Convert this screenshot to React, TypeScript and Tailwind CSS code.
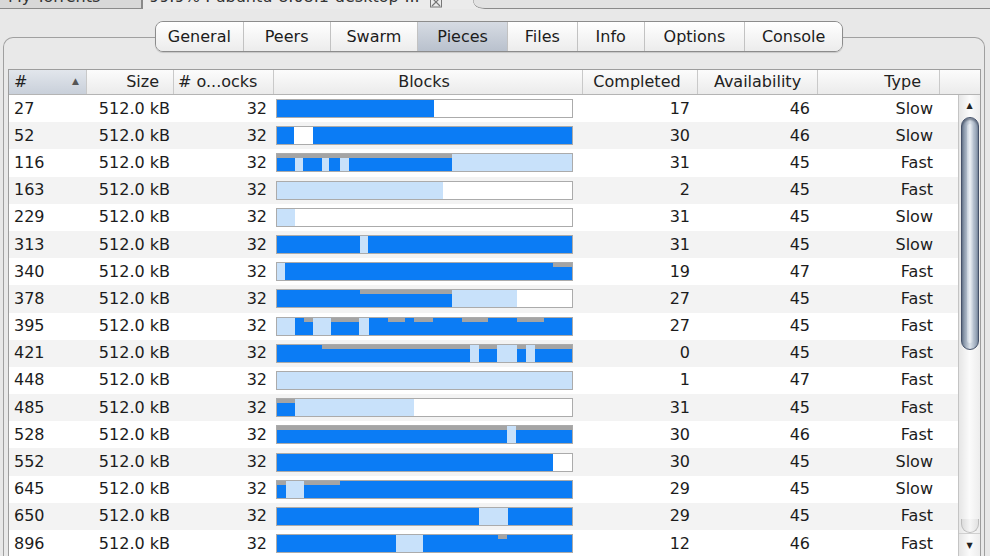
import React from "react";

type Seg = [string, number, number];
type Row = { n: string; c: string; a: string; t: string; seg: Seg[]; gray: [number, number][] };

const rows: Row[] = [
  { n: "27", c: "17", a: "46", t: "Slow", seg: [["B", 0, 158]], gray: [] },
  { n: "52", c: "30", a: "46", t: "Slow", seg: [["B", 0, 18], ["B", 37, 297]], gray: [] },
  {
    n: "116", c: "31", a: "45", t: "Fast",
    seg: [["B", 0, 19], ["L", 19, 27], ["B", 27, 46], ["L", 46, 53], ["B", 53, 64], ["L", 64, 73], ["B", 73, 176], ["L", 176, 297]],
    gray: [[0, 176]],
  },
  { n: "163", c: "2", a: "45", t: "Fast", seg: [["L", 0, 167]], gray: [] },
  { n: "229", c: "31", a: "45", t: "Slow", seg: [["L", 0, 19]], gray: [] },
  { n: "313", c: "31", a: "45", t: "Slow", seg: [["B", 0, 84], ["L", 84, 92], ["B", 92, 297]], gray: [] },
  { n: "340", c: "19", a: "47", t: "Fast", seg: [["L", 0, 9], ["B", 9, 297]], gray: [[277, 297]] },
  { n: "378", c: "27", a: "45", t: "Fast", seg: [["B", 0, 176], ["L", 176, 241]], gray: [[84, 176]] },
  {
    n: "395", c: "27", a: "45", t: "Fast",
    seg: [["L", 0, 19], ["B", 19, 37], ["L", 37, 55], ["B", 55, 83], ["L", 83, 93], ["B", 93, 297]],
    gray: [[28, 37], [55, 83], [112, 129], [138, 157], [186, 212], [241, 268]],
  },
  {
    n: "421", c: "0", a: "45", t: "Fast",
    seg: [["B", 0, 194], ["L", 194, 203], ["B", 203, 221], ["L", 221, 241], ["B", 241, 250], ["L", 250, 259], ["B", 259, 297]],
    gray: [[46, 194], [203, 221], [241, 250], [259, 297]],
  },
  { n: "448", c: "1", a: "47", t: "Fast", seg: [["L", 0, 297]], gray: [] },
  { n: "485", c: "31", a: "45", t: "Fast", seg: [["B", 0, 19], ["L", 19, 138]], gray: [[0, 19]] },
  { n: "528", c: "30", a: "46", t: "Fast", seg: [["B", 0, 297], ["L", 231, 240]], gray: [[0, 231], [240, 297]] },
  { n: "552", c: "30", a: "45", t: "Slow", seg: [["B", 0, 277]], gray: [] },
  { n: "645", c: "29", a: "45", t: "Slow", seg: [["B", 0, 297], ["L", 10, 28]], gray: [[0, 10], [28, 64]] },
  { n: "650", c: "29", a: "45", t: "Fast", seg: [["B", 0, 297], ["L", 203, 232]], gray: [] },
  { n: "896", c: "12", a: "46", t: "Fast", seg: [["B", 0, 297], ["L", 120, 147]], gray: [[222, 231]] },
];

const colors: Record<string, string> = { B: "#0b7cf5", L: "#c8e1fa" };

function clamp(v: number) {
  return Math.max(1, Math.min(296, v));
}

function Bar({ r }: { r: Row }) {
  return (
    <svg width={297} height={19} className="block">
      <rect x={0} y={0} width={297} height={19} fill="#ffffff" />
      {r.seg.map(([c, s, e], i) => (
        <rect key={i} x={clamp(s)} y={1} width={clamp(e) - clamp(s)} height={17} fill={colors[c]} />
      ))}
      {r.gray.map(([s, e], i) => (
        <rect key={"g" + i} x={clamp(s)} y={1} width={clamp(e) - clamp(s)} height={4} fill="#a4a4a4" />
      ))}
      <rect x={0.5} y={0.5} width={296} height={18} fill="none" stroke="#ababab" />
    </svg>
  );
}

const tabs: { label: string; w: string; sel?: boolean }[] = [
  { label: "General", w: "w-[88px]" },
  { label: "Peers", w: "w-[87px]" },
  { label: "Swarm", w: "w-[88px]" },
  { label: "Pieces", w: "w-[90px]", sel: true },
  { label: "Files", w: "w-[70px]" },
  { label: "Info", w: "w-[67px]" },
  { label: "Options", w: "w-[101px]" },
  { label: "Console", w: "w-[97px]" },
];

export default function App() {
  return (
    <div
      className="w-[990px] h-[556px] overflow-hidden bg-[#e8e8e8] text-[#1c1c1c] text-[16px]"
      style={{ fontFamily: '"DejaVu Sans", Verdana, sans-serif' }}
    >
      {/* top window tabs */}
      <div className="flex h-[9px]">
        <div className="w-[143px] h-[9px] overflow-hidden bg-[#d8d8d8] border-r-2 border-b border-[#8a8a8a]">
          <div className="-mt-[11px] pl-[8px] leading-[16px] text-[#333]">My Torrents</div>
        </div>
        <div className="w-[330px] h-[9px] overflow-hidden bg-[#ebebeb] flex items-start">
          <div className="-mt-[11px] pl-[6px] leading-[16px] whitespace-nowrap text-[#333]">
            99.9% : ubuntu-8.08.1-desktop-...
          </div>
          <svg width="14" height="9" className="ml-[9px] shrink-0">
            <rect x="1.5" y="-4" width="11" height="11" fill="none" stroke="#777" />
            <path d="M3 -2 L11 6 M11 -2 L3 6" stroke="#777" strokeWidth="1.2" />
          </svg>
        </div>
        <svg width="30" height="9" className="shrink-0">
          <rect x="0" y="0" width="30" height="9" fill="#e2e2e2" />
          <path d="M0 0 C0 5 4 8.5 12 8.5 L30 8.5" fill="none" stroke="#8a8a8a" />
          <path d="M0 0 L0 9 L12 9 C4 9 0 5 0 0 Z" fill="#ebebeb" />
        </svg>
        <div className="flex-1 h-[9px] bg-[#e2e2e2] border-b border-[#8a8a8a]" />
      </div>

      {/* group box */}
      <div className="mt-[28px] ml-[3px] w-[982px] h-[600px] border border-b-0 border-[#a0a0a0] rounded-t-[10px] bg-[#e9e9e9]">
        <div className="relative -mt-[17px] ml-[151px] flex h-[31px] w-[688px] rounded-[8px] border border-[#8c8c8c] overflow-hidden shadow-[0_1px_1px_rgba(0,0,0,0.15)]">
          {tabs.map((t, i) => (
            <div
              key={t.label}
              className={
                "h-full flex items-center justify-center " +
                t.w +
                (i < tabs.length - 1 ? " border-r border-[#c2c2c2]" : "") +
                (t.sel
                  ? " bg-gradient-to-b from-[#d6dbe3] to-[#b9c1cd]"
                  : " bg-gradient-to-b from-[#ffffff] to-[#ececec]")
              }
            >
              {t.label}
            </div>
          ))}
        </div>

        {/* table */}
        <div className="mt-[17px] ml-[4px] w-[973px] h-[520px] border border-b-0 border-[#9d9d9d] bg-white">
          <div className="flex h-[25px] border-b border-[#b4b4b4] bg-gradient-to-b from-[#fcfcfc] to-[#ebebeb] text-[#222]">
            <div className="w-[78px] flex items-center justify-between pl-[5px] pr-[7px] border-r border-[#c9c9c9] bg-gradient-to-b from-[#e2e6ec] to-[#c9d0da]">
              <span>#</span>
              <span className="text-[9px] text-[#555]">▲</span>
            </div>
            <div className="w-[87px] flex items-center justify-end pr-[14px] border-r border-[#c9c9c9]">Size</div>
            <div className="w-[100px] flex items-center pl-[4px] border-r border-[#c9c9c9] whitespace-nowrap">
              # o...ocks
            </div>
            <div className="w-[309px] flex items-center justify-center pr-[8px] border-r border-[#c9c9c9]">Blocks</div>
            <div className="w-[115px] flex items-center justify-center pr-[6px] border-r border-[#c9c9c9]">Completed</div>
            <div className="w-[120px] flex items-center justify-center border-r border-[#c9c9c9]">Availability</div>
            <div className="w-[122px] flex items-center justify-end pr-[18px] border-r border-[#c9c9c9]">Type</div>
            <div className="flex-1" />
          </div>

          <div className="flex">
            <div className="w-[949px] flex flex-col">
              {rows.map((r, i) => (
                <div
                  key={r.n}
                  className={"flex h-[27.2px] shrink-0 items-center " + (i % 2 === 1 ? "bg-[#f3f3f3]" : "bg-white")}
                >
                  <div className="w-[78px] pl-[5px]">{r.n}</div>
                  <div className="w-[87px] pr-[4px] text-right">512.0 kB</div>
                  <div className="w-[100px] pr-[7px] text-right">32</div>
                  <div className="w-[309px] pl-[2px]">
                    <Bar r={r} />
                  </div>
                  <div className="w-[115px] pr-[8px] text-right">{r.c}</div>
                  <div className="w-[120px] pr-[8px] text-right">{r.a}</div>
                  <div className="w-[122px] pr-[7px] text-right">{r.t}</div>
                </div>
              ))}
            </div>

            {/* scrollbar */}
            <div className="w-[22px] h-[462px] flex flex-col border-l border-[#c4c4c4] bg-gradient-to-r from-[#e6e6e6] via-[#fbfbfb] to-[#ededed]">
              <div className="h-[22px] flex items-center justify-center text-[8px] text-[#222]">▲</div>
              <div className="mx-auto w-[18px] h-[233px] rounded-full border border-[#45526a] bg-gradient-to-r from-[#6f7f95] via-[#dde4ec] to-[#8595aa] shadow-[inset_0_2px_2px_rgba(40,50,70,0.5)]">
                <div className="mx-auto mt-[6px] w-[6px] h-[219px] bg-gradient-to-r from-[#c5cfdb] via-[#eef2f6] to-[#c0cad7] rounded-full" />
              </div>
              <div className="flex-1" />
              <div className="mx-auto w-[18px] h-[14px] rounded-b-full border border-t-0 border-[#bcbcbc] bg-gradient-to-r from-[#dcdcdc] via-[#f6f6f6] to-[#e2e2e2]" />
              <div className="h-[24px] flex items-center justify-center text-[8px] text-[#222] border-t border-[#d0d0d0]">▼</div>
            </div>
          </div>
        </div>
      </div>
    </div>
  );
}
